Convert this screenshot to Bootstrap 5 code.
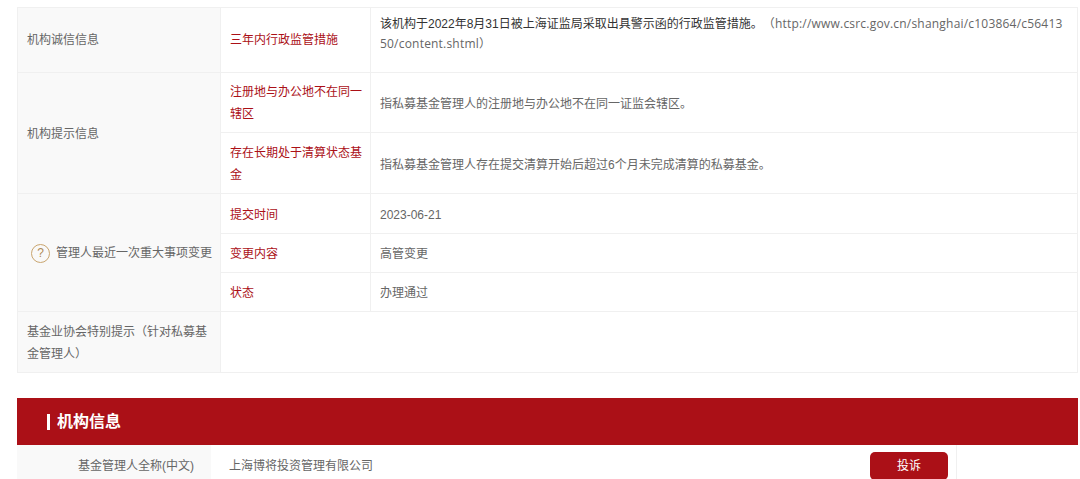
<!DOCTYPE html>
<html lang="zh-CN">
<head>
<meta charset="utf-8">
<title>机构信息</title>
<link href="https://cdn.jsdelivr.net/npm/bootstrap@5.3.0/dist/css/bootstrap.min.css" rel="stylesheet">
<style>
body{font-family:"Liberation Sans","Noto Sans CJK SC",sans-serif;font-size:12px;color:#666;background:#fff;overflow:hidden;text-spacing-trim:space-all;font-feature-settings:"chws" 0,"palt" 0}
.page-wrap{padding:7px 2px 0 17px}
.info-tbl{table-layout:fixed;width:1061px;margin:0;border-color:#f0f0f0;--bs-table-color:#666;--bs-table-bg:transparent}
.info-tbl td{padding:1px 6px 0 9px;line-height:22px;vertical-align:middle;font-size:12px;word-break:break-all;color:#666;border-color:#f0f0f0}
.lbl{background:#f9f9f9!important}
.info-tbl .lbl-mid{padding-right:2px}
.red-lbl{color:#ab1017!important;background:#fdfdfd}
.info-tbl .first-note{padding:0 8px 13px 9px;line-height:20px}
.info-tbl .first-cell{padding-top:0}
.info-tbl .nudge{padding-top:3px}
.dark-txt{color:#333}
.url-txt{font-family:"Open Sans","Noto Sans CJK SC",sans-serif;letter-spacing:.2px}
.h65{height:65px}.h60{height:60px}.h61{height:61px}.h40{height:40px}.h39{height:39px}
.help-ic{width:19px;height:19px;border:1px solid #c9a56f;border-radius:50%;color:#b08a55;font-size:12px;line-height:17px;text-align:center;margin:0 6px 0 4px;flex:none}
.band{margin-top:25px;width:1061px;height:47px;background:#ab1017;color:#fff;font-size:16px;font-weight:700;padding-left:30px}
.band-bar{width:3px;height:16px;background:#fff;margin-right:7px}
.org-tbl{table-layout:fixed;width:940px;margin:0;--bs-table-bg:transparent}
.org-tbl td{height:40px;padding:1px 0 0;font-size:12px;color:#666;border:0;vertical-align:middle}
.org-k{width:194px;background:#f9f9f9!important;text-align:right;padding-right:17px!important}
.org-v{padding-left:18px!important;border-right:1px solid #f0f0f0!important}
.act-btn{width:78px;height:28px;background:#ab1017;color:#fff;font-size:12px;padding:0;border:0;border-radius:5px;margin-right:8px}
.act-btn:hover{background:#ab1017;color:#fff}
</style>
</head>
<body>
<div class="page-wrap">
<table class="table table-bordered info-tbl">
<colgroup><col style="width:203px"><col style="width:150px"><col></colgroup>
<tbody>
<tr class="h65"><td class="lbl first-cell">机构诚信信息</td><td class="red-lbl first-cell">三年内行政监管措施</td><td class="first-note"><span class="dark-txt">该机构于2022年8月31日被上海证监局采取出具警示函的行政监管措施。</span><span class="url-txt">（http://www.csrc.gov.cn/shanghai/c103864/c5641350/content.shtml）</span></td></tr>
<tr class="h60"><td class="lbl" rowspan="2">机构提示信息</td><td class="red-lbl">注册地与办公地不在同一辖区</td><td class="nudge">指私募基金管理人的注册地与办公地不在同一证监会辖区。</td></tr>
<tr class="h61"><td class="red-lbl">存在长期处于清算状态基金</td><td class="nudge">指私募基金管理人存在提交清算开始后超过6个月未完成清算的私募基金。</td></tr>
<tr class="h40"><td class="lbl lbl-mid" rowspan="3"><div class="d-flex align-items-center"><span class="help-ic">?</span><span>管理人最近一次重大事项变更</span></div></td><td class="red-lbl nudge">提交时间</td><td class="nudge">2023-06-21</td></tr>
<tr class="h39"><td class="red-lbl">变更内容</td><td>高管变更</td></tr>
<tr class="h39"><td class="red-lbl">状态</td><td>办理通过</td></tr>
<tr class="h61"><td class="lbl">基金业协会特别提示（针对私募基金管理人）</td><td colspan="2"></td></tr>
</tbody>
</table>
<div class="band d-flex align-items-center"><span class="band-bar"></span>机构信息</div>
<table class="table org-tbl">
<tbody>
<tr><td class="org-k">基金管理人全称(中文)</td><td class="org-v"><div class="d-flex justify-content-between align-items-center"><span>上海博将投资管理有限公司</span><button type="button" class="btn act-btn">投诉</button></div></td></tr>
</tbody>
</table>
</div>
</body>
</html>
